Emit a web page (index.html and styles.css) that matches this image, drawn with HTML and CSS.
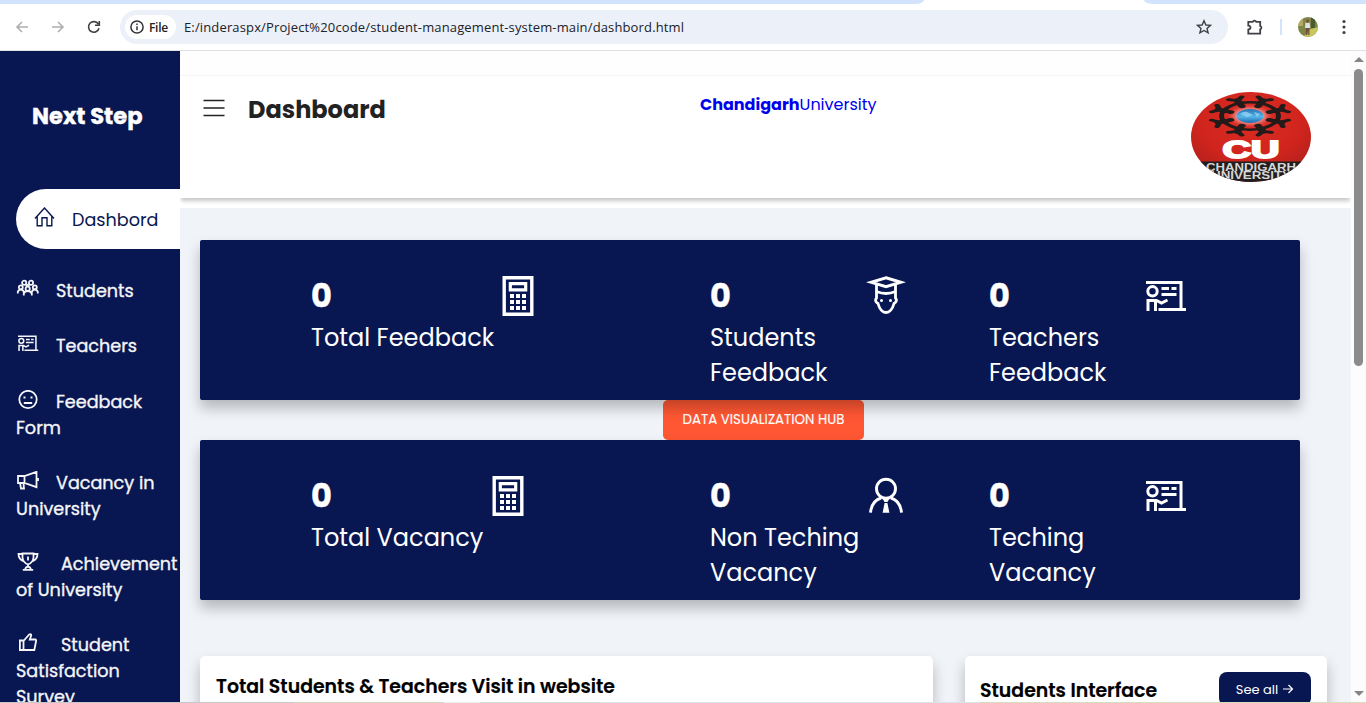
FILE: index.html
```html
<!DOCTYPE html>
<html lang="en">
<head>
<meta charset="utf-8">
<title>Dashboard</title>
<link rel="stylesheet" href="styles.css">
</head>
<body>
<svg width="0" height="0" class="defs">
  <defs>
    <symbol id="board" viewBox="0 0 40 40">
      <path d="M0 6.500H35M35 5V33M12.500 33.500H40" fill="none" stroke="currentColor" stroke-width="3"/>
      <circle cx="6.500" cy="15.300" r="4.700" fill="none" stroke="currentColor" stroke-width="3"/>
      <path d="M15.500 12.500h7.500M25.500 12.500h5M15.500 18.500h15" fill="none" stroke="currentColor" stroke-width="3"/>
      <path d="M2 35V24.500h8.500l5 2.500 6-3M9.500 25V35" fill="none" stroke="currentColor" stroke-width="3"/>
    </symbol>
    <symbol id="calc" viewBox="0 0 40 40">
      <path d="M6.200 1.700h27.600v36.600H6.200z" fill="none" stroke="currentColor" stroke-width="3.400"/>
      <path d="M12.300 7.600h15.400v6.200H12.300z" fill="none" stroke="currentColor" stroke-width="3.200"/>
      <path d="M12 20h16M12 26h16M12 32h16" fill="none" stroke="currentColor" stroke-width="3.800" stroke-dasharray="4 2"/>
    </symbol>
    <symbol id="grad" viewBox="0 0 40 40">
      <path d="M20 1.800 35 6.300 20 10.800 5 6.300z" fill="none" stroke="currentColor" stroke-width="3"/>
      <path d="M10.500 8v14q-2.500 3 1.500 5.500 2.500 9 8 9t8-9q4-2.500 1.500-5.500V8M10.500 15.500q9.500 4 19 0" fill="none" stroke="currentColor" stroke-width="2.800"/>
      <circle cx="15.500" cy="24.500" r="1.500" fill="currentColor"/><circle cx="24.500" cy="24.500" r="1.500" fill="currentColor"/>
    </symbol>
    <symbol id="tie" viewBox="0 0 40 40">
      <circle cx="20" cy="12.800" r="9.500" fill="none" stroke="currentColor" stroke-width="2.900"/>
      <path d="M4.500 36.700Q5.500 25 15 22M35.500 36.700Q34.500 25 25 22" fill="none" stroke="currentColor" stroke-width="2.900"/>
      <path d="M16.500 22.500h7L21.500 26h-3zM18.600 27h2.800l2 9.700h-6.800z" fill="currentColor"/>
    </symbol>
  </defs>
</svg>

<div class="browser">
  <div class="tabs"><span class="strip strip-left"></span><span class="strip strip-right"></span></div>
  <div class="toolbar">
    <svg class="nav" viewBox="0 0 14 14"><path d="M13 7H2M7 2 2 7l5 5"/></svg>
    <svg class="nav forward" viewBox="0 0 14 14"><path d="M1 7h11M7 2l5 5-5 5"/></svg>
    <svg class="nav reload" viewBox="0 0 14 14"><path d="M12 8.200A5.300 5.300 0 1 1 11.300 4M12.300 1v4.300H8"/></svg>
    <div class="omnibox">
      <span class="chip"><svg viewBox="0 0 14 14"><circle cx="7" cy="7" r="6.100"/><path d="M7 6.300v4M7 3.500v1.500"/></svg>File</span>
      <span class="url">E:/inderaspx/Project%20code/student-management-system-main/dashbord.html</span>
      <svg class="star" viewBox="0 0 16 16"><path d="M8 1.800 9.900 6l4.600.4-3.500 3 1.100 4.500L8 11.500l-4.100 2.400L5 9.400l-3.500-3L6.100 6z"/></svg>
    </div>
    <svg class="ext" viewBox="0 0 18 18"><path d="M2.300 3.800h4.500a1.800 1.800 0 0 1 3.400 0h4v4.200a1.800 1.800 0 0 1 0 3.400v4.300H2.300v-4.200q2.200-.3 2.200-1.900t-2.200-1.900z"/></svg>
    <span class="divider"></span>
    <svg class="avatar" viewBox="0 0 20 20"><defs><clipPath id="round"><circle cx="10" cy="10" r="10"/></clipPath></defs><g clip-path="url(#round)"><path fill="#7d8646" d="M0 0h20v20H0z"/><path fill="#b3aa62" d="M0 0h5v9H0z"/><path fill="#c6c75d" d="M10 13 20 10v10H6z"/><path fill="#4c5b2e" d="M13 0h4v11h-4z"/><path fill="#dfe2e2" d="M7.500 5.500h4l.8 5.500H7z"/><path fill="#76503d" d="M8.300 2.500h2.500v3.300H8.300zM7.800 11h3.700v7h-1.300v-4L9.300 18H7.800z"/></g></svg>
    <svg class="more" viewBox="0 0 4 16"><circle cx="2" cy="2.500" r="1.600"/><circle cx="2" cy="8" r="1.600"/><circle cx="2" cy="13.500" r="1.600"/></svg>
  </div>
</div>

<div class="page">
  <nav class="sidebar">
    <h1>Next Step</h1>
    <a class="item active"><svg class="home" viewBox="0 0 20 20"><path d="M.5 11.500 10 1l9.500 10.500M2.700 9.500v9.300h4.800v-8h5v8h4.800V9.500"/></svg>Dashbord</a>
    <a class="item"><svg class="ico" viewBox="0 0 24 20"><circle cx="8.200" cy="3.800" r="2.100"/><circle cx="15" cy="3.800" r="2.100"/><circle cx="4.800" cy="8.300" r="2"/><circle cx="18.800" cy="8.300" r="2"/><circle cx="11.700" cy="9.700" r="2.100"/><path d="M1.800 14.500V13q.5-2.300 3-2.300t3 2.300v3.500M7.800 14.500q1-2.500 3.900-2.500t3.900 2.500M15.800 16.500V13q.5-2.300 3-2.300t3 2.300v1.500M9.700 6.700l2-1 2 1"/></svg>Students</a>
    <a class="item"><svg class="ico" viewBox="0 0 24 20"><use href="#board" x="2" y="-1" width="20.500" height="20.500"/></svg>Teachers</a>
    <a class="item"><svg class="ico" viewBox="0 0 24 20"><circle cx="12" cy="9.500" r="8.700"/><path d="M7.800 13h8.400M7.500 7.500h2M14.500 7.500h2" stroke-width="2"/></svg>Feedback<br>Form</a>
    <a class="item"><svg class="ico" viewBox="0 0 24 20"><path d="M2 5h6.500L20.500.8v15.400L8.500 12H2zM8.500 5v7M4 12l1 5.500h3L7.500 12M22 7v3"/></svg>Vacancy in<br>University</a>
    <a class="item"><svg class="ico wide" viewBox="0 0 24 20"><path d="M6.500 1.500h11v4q-.5 5-5.500 7-5-2-5.500-7zM6.500 2H2.500q0 5.500 5.500 7.500M17.500 2h4q0 5.500-5.500 7.500M12 12.500v3M6.800 17.800h10.400M9 17.500q.5-2.500 3-3 2.500.5 3 3M12 4.500v4"/></svg>Achievement<br>of University</a>
    <a class="item"><svg class="ico wide" viewBox="0 0 24 20"><path d="M3.900 7.500h3.600v9.500H3.900zM7.500 8 13.200 1.500q2.200-.8 2 1L13.800 6.500h5.400q1.200.2.900 1.500L18.300 17H7.500"/></svg>Student<br>Satisfaction<br>Survey</a>
  </nav>

  <main class="content">
    <div class="topgap"></div>
    <header class="header">
      <svg class="burger" viewBox="0 0 22 18"><path d="M.5 1.500h21M.5 9h21M.5 16.500h21"/></svg>
      <h2>Dashboard</h2>
      <a class="brand"><b>Chandigarh</b>University</a>
      <svg class="logo" viewBox="0 0 120 90">
        <defs>
          <clipPath id="oval"><ellipse cx="60" cy="45" rx="60" ry="45"/></clipPath>
          <radialGradient id="red" cx=".5" cy=".3" r=".75"><stop offset="0" stop-color="#dc2c22"/><stop offset=".6" stop-color="#cf241d"/><stop offset="1" stop-color="#a91f1b"/></radialGradient>
          <radialGradient id="glow"><stop offset=".4" stop-color="#fbd9d5"/><stop offset="1" stop-color="#e0403a" stop-opacity="0"/></radialGradient>
          <linearGradient id="globe" x2="0" y2="1"><stop offset="0" stop-color="#2872b4"/><stop offset=".55" stop-color="#55b5e8"/><stop offset="1" stop-color="#1e67ae"/></linearGradient>
          <g id="person" fill="none" stroke="#221b1a" stroke-linecap="round" stroke-linejoin="round"><ellipse cy="-21.500" rx="3.800" ry="4.200" fill="#221b1a" stroke="none"/><path d="M0-26V-34" stroke-width="8"/><path d="M-7-38.500 0-33 7-38.500" stroke-width="5.500"/></g>
        </defs>
        <g clip-path="url(#oval)">
          <path fill="url(#red)" d="M0 0h120v90H0z"/>
          <ellipse cx="59" cy="24" rx="24" ry="12" fill="url(#glow)"/>
          <g transform="translate(59 24) scale(1 .48)">
            <circle r="28.500" fill="none" stroke="#221b1a" stroke-width="5"/>
          </g>
          <g transform="translate(59 24) scale(1 .5)">
            <use href="#person" transform="rotate(22.500)"/><use href="#person" transform="rotate(67.500)"/><use href="#person" transform="rotate(112.500)"/><use href="#person" transform="rotate(157.500)"/><use href="#person" transform="rotate(202.500)"/><use href="#person" transform="rotate(247.500)"/><use href="#person" transform="rotate(292.500)"/><use href="#person" transform="rotate(337.500)"/>
          </g>
          <ellipse cx="59" cy="24" rx="13.500" ry="7" fill="url(#globe)"/>
          <path d="M49 22q5-4 9-1l4 2-6 2zM63 20l6 2-3 3z" fill="#9ddaf5" opacity=".7"/>
          <path fill="#201e1f" d="M0 69.500h120V90H0z"/>
          <text class="cu" x="31.500" y="65.500" textLength="57" lengthAdjust="spacingAndGlyphs">CU</text>
          <text class="cap" x="15" y="79" textLength="90" lengthAdjust="spacingAndGlyphs">CHANDIGARH</text>
          <text class="cap" x="20" y="87" textLength="80" lengthAdjust="spacingAndGlyphs">UNIVERSITY</text>
        </g>
      </svg>
    </header>

    <div class="body">
      <section class="stats">
        <div class="stat"><div class="label feedback"><strong>0</strong>Total Feedback</div><svg class="big"><use href="#calc"/></svg></div>
        <div class="stat"><div class="label"><strong>0</strong>Students<br>Feedback</div><svg class="big"><use href="#grad"/></svg></div>
        <div class="stat"><div class="label teacher"><strong>0</strong>Teachers<br>Feedback</div><svg class="big"><use href="#board"/></svg></div>
      </section>
      <div class="hub-row"><a class="hub">DATA VISUALIZATION HUB</a></div>
      <section class="stats">
        <div class="stat"><div class="label vacancy"><strong>0</strong>Total Vacancy</div><svg class="big"><use href="#calc"/></svg></div>
        <div class="stat"><div class="label"><strong>0</strong>Non Teching<br>Vacancy</div><svg class="big"><use href="#tie"/></svg></div>
        <div class="stat"><div class="label teacher"><strong>0</strong>Teching<br>Vacancy</div><svg class="big"><use href="#board"/></svg></div>
      </section>
      <div class="panels">
        <section class="panel"><h3>Total Students &amp; Teachers Visit in website</h3></section>
        <section class="panel side"><h3>Students Interface</h3><a class="all">See all<svg viewBox="0 0 12 12"><path d="M1 6h9.500M6.500 2l4 4-4 4"/></svg></a></section>
      </div>
    </div>
  </main>

  <div class="scrollbar"><i class="up"></i><i class="thumb"></i><i class="down"></i></div>
</div>
<div class="edge"></div>
</body>
</html>
```
FILE: styles.css
```css
* { box-sizing: border-box; }
body { margin: 0; width: 1366px; height: 703px; overflow: hidden; display: flex; flex-direction: column; background: #fff; font-family: Poppins, Inter, sans-serif; }
.defs { position: absolute; }
h1, h2, h3 { margin: 0; }
svg { flex: none; }

.browser { height: 51px; flex: none; background: #fff; border-bottom: 1px solid #dfe1e4; }
.tabs { height: 4px; display: flex; justify-content: space-between; }
.strip { background: #d3e3fd; height: 4px; }
.strip-left { width: 924px; border-bottom-right-radius: 9px 4px; }
.strip-right { width: 222px; border-bottom-left-radius: 9px 4px; }
.toolbar { height: 46px; padding: 0 20px 0 15px; display: flex; align-items: center; }
.nav { width: 14px; height: 14px; margin-right: 22px; fill: none; stroke: #afafaf; stroke-width: 1.6; }
.nav.forward { margin-right: 20px; }
.nav.reload { margin-left: 2px; margin-right: 18px; stroke: #3f4145; stroke-width: 1.6; }
.omnibox { width: 1108px; height: 34px; margin-left: 1px; padding: 0 16px 0 5px; border-radius: 17px; background: #ecf0f9; display: flex; align-items: center; }
.chip { width: 51px; height: 24px; padding-left: 5px; border-radius: 12px; background: #fff; display: flex; align-items: center; gap: 5px; font: 600 12px "Open Sans", sans-serif; letter-spacing: -.3px; color: #202124; }
.chip svg { width: 14px; height: 14px; fill: none; stroke: #303236; stroke-width: 1.5; }
.url { margin-left: 8px; flex: 1; font: 13px "Open Sans", sans-serif; letter-spacing: .14px; color: #202227; white-space: nowrap; }
.star { width: 16px; height: 16px; fill: none; stroke: #3f4145; stroke-width: 1.4; }
.ext { width: 18px; height: 18px; margin-left: 18px; fill: none; stroke: #3f4145; stroke-width: 1.8; }
.divider { width: 2px; height: 16px; margin: 0 16px 0 16px; background: #d3e3fd; }
.avatar { width: 20px; height: 20px; }
.more { width: 4px; height: 16px; margin-left: 24px; fill: #3f4145; }

.page { height: 651px; flex: none; display: flex; overflow: hidden; }
.sidebar { width: 180px; flex: none; padding: 49px 0 0 16px; background: #081751; color: #f5f5f7; }
.sidebar h1 { height: 89px; padding-left: 16px; font-size: 22.6px; line-height: 33px; font-weight: 700; color: #fff; -webkit-text-stroke: .4px #fff; }
.item { display: block; margin-bottom: 29.25px; font-size: 17.6px; font-weight: 400; line-height: 26px; white-space: nowrap; -webkit-text-stroke: .35px currentColor; }
.item.active { height: 60px; padding: 2px 0 0 17px; border-radius: 30px 0 0 30px; background: #fff; color: #081751; display: flex; align-items: center; margin-bottom: 29.1px; -webkit-text-stroke: 0; }
.home { width: 21px; height: 20px; margin: -6px 17px 0 1px; fill: none; stroke: #081751; stroke-width: 1.4; }
.ico { width: 24px; height: 20px; margin: 0 16px 0 0; vertical-align: -2px; fill: none; stroke: currentColor; stroke-width: 1.8; }
.ico.wide { margin-right: 21px; }

.content { width: 1171px; flex: none; background: #f0f3f8; overflow: hidden; }
.topgap { height: 25px; background: #fefefe; border-bottom: 1px solid #f6f6f6; }
.header { height: 122px; padding: 16px 40px 0 23px; display: flex; align-items: flex-start; background: #fff; box-shadow: 0 4px 4px -1px rgba(0,0,0,.22), 0 10px 0 #fff; }
.burger { width: 22px; height: 18px; margin-top: 7px; fill: none; stroke: #222; stroke-width: 1.7; }
.header h2 { width: 452px; margin-left: 23px; padding-top: 2px; font-size: 24px; line-height: 32px; font-weight: 700; color: #222; }
.brand { width: 491px; padding-top: 1px; font-size: 16px; line-height: 24px; color: #00e; }
.logo { width: 120px; height: 90px; }
.cu { font: 900 24px "Liberation Sans", sans-serif; fill: #fff; stroke: #fff; stroke-width: 1.8; }
.cap { font: 700 10px "Liberation Sans", sans-serif; fill: #d8d6d5; }

.body { padding: 42px 24px 0 20px; }
.stats { width: 1100px; height: 160px; padding: 36px 0 0 111px; display: grid; grid-template-columns: 399px 279px 1fr; background: #081751; color: #fff; border-radius: 2px; position: relative; box-shadow: 0 8px 14px rgba(0,0,0,.25); }
.stat { display: flex; align-items: flex-start; }
.label { width: 156px; font-size: 24px; line-height: 35px; white-space: nowrap; }
.label strong { display: block; font-size: 32px; line-height: 40px; margin: 0 0 4px; font-weight: 700; -webkit-text-stroke: .4px #fff; }
.feedback { width: 187px; }
.vacancy { width: 177px; }
.teacher { width: 157px; }
.big { width: 40px; height: 40px; }
.hub-row { height: 40px; padding-left: 463px; }
.hub { display: block; width: 201px; height: 40px; border-radius: 5px; background: #ff5733; color: #fff; text-align: center; font-size: 13.33px; line-height: 39px; -webkit-text-stroke: .15px #fff; }
.panels { margin-top: 56px; display: flex; gap: 32px; }
.panel { width: 733px; height: 300px; padding: 17px 16px; border-radius: 5px; background: #fff; box-shadow: 0 8px 14px rgba(0,0,0,.25); }
.panel h3 { font-size: 18.9px; line-height: 28px; font-weight: 600; white-space: nowrap; color: #000; -webkit-text-stroke: .2px #000; }
.side { width: 362px; padding: 16px; display: flex; justify-content: space-between; align-items: flex-start; }
.side h3 { padding-top: 5px; margin-left: -1px; }
.all { width: 92px; height: 34px; padding-top: 1px; border-radius: 8px; background: #081751; color: #fff; display: flex; align-items: center; justify-content: center; gap: 4px; font-size: 13px; }
.all svg { width: 12px; height: 12px; margin-top: -2px; fill: none; stroke: #fff; stroke-width: 1.2; }

.scrollbar { width: 15px; flex: none; background: #fcfcfc; display: flex; flex-direction: column; align-items: center; padding: 6px 0 6px; }
.up { border: 5px solid transparent; border-top: 0; border-bottom: 5px solid #858585; }
.thumb { width: 9px; height: 297px; margin-top: 7px; border-radius: 5px; background: #8b8b8b; }
.down { margin-top: auto; border: 5px solid transparent; border-bottom: 0; border-top: 5px solid #858585; }
.edge { height: 1px; flex: none; background: linear-gradient(90deg, #c8c8c8 0 294px, #d4d8b8 294px 444px, #eceef0 444px 480px, #d3ddd9 480px 600px, #dbe2ea 600px 980px, #d5dfb9 980px); }
```
